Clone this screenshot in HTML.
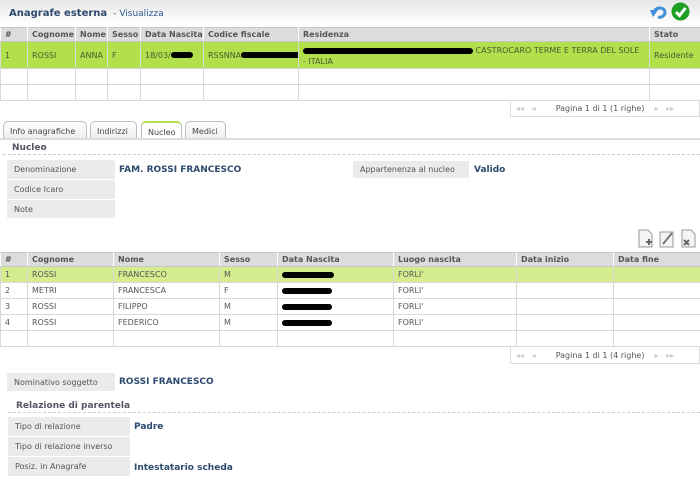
<!DOCTYPE html><html><head><meta charset="utf-8"><style>
*{margin:0;padding:0;box-sizing:border-box}
body{width:700px;height:483px;background:#fff;position:relative;overflow:hidden;font-family:"DejaVu Sans","Liberation Sans",sans-serif;font-size:8px;color:#555}
.a{position:absolute}
table{border-collapse:collapse;position:absolute;table-layout:fixed}
td,th{border:1px solid #d8d8d8;padding:0 4px;text-align:left;white-space:nowrap;overflow:hidden}
th{background:#dcdcdc;color:#555;font-weight:bold;border-color:#c8c8c8 #fff}
.lbl{position:absolute;background:#ebebeb;color:#555;padding-left:7px;display:flex;align-items:center;border-bottom:1px solid #fff}
.val{position:absolute;color:#2d4a6e;font-weight:bold;font-size:9px}
.pager{position:absolute;border:1px solid #ddd;color:#555;font-size:8px;display:flex;align-items:center}
.blk{display:inline-block;background:#000;border-radius:4px;height:6px;vertical-align:middle}
.tab{position:absolute;top:121px;height:18px;border:1px solid #bbb;border-bottom:none;border-radius:5px 5px 0 0;background:linear-gradient(#fff,#eee);padding:5px 0 0 6px;color:#444}
.dash{position:absolute;border-top:1px dashed #ccc;height:0}
</style></head><body>
<div class="a" style="left:0;top:0;width:700px;height:25px;background:linear-gradient(#e6e6e6,#fff)"></div>
<div class="a" style="left:9px;top:8px;font-size:10px;color:#2d4a6e"><b>Anagrafe esterna</b> <span style="font-size:9px;color:#2d5a8e">&nbsp;- Visualizza</span></div>
<svg class="a" style="left:650px;top:4px" width="18" height="16" viewBox="0 0 18 16"><path d="M4 9 C4 3 14 2 15 8 C15 12 11 14 8 13" fill="none" stroke="#3d8fd8" stroke-width="3"/><path d="M0 6 L8 6 L3 13 Z" fill="#3d8fd8"/></svg>
<svg class="a" style="left:671px;top:2px" width="19" height="19"><circle cx="9.5" cy="9.5" r="9" fill="#1e9e22"/><path d="M5 10 L8.5 13.5 L14.5 6" stroke="#fff" stroke-width="3" fill="none"/></svg>

<table style="left:0;top:27px;width:700px">
<colgroup><col style="width:27px"><col style="width:48px"><col style="width:32px"><col style="width:33px"><col style="width:63px"><col style="width:95px"><col style="width:351px"><col style="width:51px"></colgroup>
<tr style="height:14px"><th>#</th><th>Cognome</th><th>Nome</th><th>Sesso</th><th>Data Nascita</th><th>Codice fiscale</th><th>Residenza</th><th>Stato</th></tr>
<tr style="height:27px;background:#b2df4c;color:#4a5a30"><td>1</td><td>ROSSI</td><td>ANNA</td><td>F</td><td>18/03/<span class="blk" style="width:22px"></span></td><td>RSSNNA<span class="blk" style="width:60px"></span></td><td style="vertical-align:top;padding-top:3px;line-height:11px"><span class="blk" style="width:170px"></span> CASTROCARO TERME E TERRA DEL SOLE<br>- ITALIA</td><td>Residente</td></tr>
<tr style="height:16px"><td></td><td></td><td></td><td></td><td></td><td></td><td></td><td></td></tr>
<tr style="height:16px"><td></td><td></td><td></td><td></td><td></td><td></td><td></td><td></td></tr>
</table>
<div class="pager" style="left:510px;top:100px;width:190px;height:17px"><span style="color:#ccc;margin-left:5px">◂◂ &nbsp; ◂</span><span style="margin-left:20px">Pagina 1 di 1 (1 righe)</span><span style="color:#ccc;margin-left:10px">▸ &nbsp; ▸▸</span></div>

<div class="tab" style="left:3px;width:84px">Info anagrafiche</div>
<div class="tab" style="left:90px;width:47px">Indirizzi</div>
<div class="tab" style="left:141px;width:41px;border-top:2px solid #b2df4c;background:#fff">Nucleo</div>
<div class="tab" style="left:185px;width:41px">Medici</div>
<div class="a" style="left:0;top:138px;width:700px;border-top:2px solid #ddd"></div>
<div class="a" style="left:12px;top:143px;font-weight:bold;color:#556;font-size:9px">Nucleo</div>
<div class="dash" style="left:3px;top:154px;width:697px"></div>
<div class="lbl" style="left:7px;top:160px;width:108px;height:20px">Denominazione</div>
<div class="lbl" style="left:7px;top:180px;width:108px;height:20px">Codice Icaro</div>
<div class="lbl" style="left:7px;top:200px;width:108px;height:19px">Note</div>
<div class="val" style="left:119px;top:165px">FAM. ROSSI FRANCESCO</div>
<div class="lbl" style="left:353px;top:161px;width:116px;height:18px">Appartenenza al nucleo</div>
<div class="val" style="left:474px;top:165px">Valido</div>

<svg class="a" style="left:638px;top:229px" width="60" height="19"><g fill="#f4f4f4" stroke="#999"><path d="M1 1h9l4 4v13h-13z"/><path d="M22 3h13v15h-13z"/><path d="M44 1h9l4 4v13h-13z"/></g><path d="M8 13h6M11 10v6" stroke="#666" stroke-width="2"/><path d="M25 15l9-11" stroke="#777" stroke-width="2"/><path d="M46 11l5 5M51 11l-5 5" stroke="#666" stroke-width="2"/></svg>

<table style="left:0;top:252px;width:700px">
<colgroup><col style="width:27px"><col style="width:86px"><col style="width:106px"><col style="width:58px"><col style="width:116px"><col style="width:123px"><col style="width:97px"><col style="width:87px"></colgroup>
<tr style="height:14px"><th>#</th><th>Cognome</th><th>Nome</th><th>Sesso</th><th>Data Nascita</th><th>Luogo nascita</th><th>Data inizio</th><th>Data fine</th></tr>
<tr style="height:16px;background:#d4eb8e"><td>1</td><td>ROSSI</td><td>FRANCESCO</td><td>M</td><td><span class="blk" style="width:52px"></span></td><td>FORLI'</td><td></td><td></td></tr>
<tr style="height:16px"><td>2</td><td>METRI</td><td>FRANCESCA</td><td>F</td><td><span class="blk" style="width:50px"></span></td><td>FORLI'</td><td></td><td></td></tr>
<tr style="height:16px"><td>3</td><td>ROSSI</td><td>FILIPPO</td><td>M</td><td><span class="blk" style="width:50px"></span></td><td>FORLI'</td><td></td><td></td></tr>
<tr style="height:16px"><td>4</td><td>ROSSI</td><td>FEDERICO</td><td>M</td><td><span class="blk" style="width:50px"></span></td><td>FORLI'</td><td></td><td></td></tr>
<tr style="height:16px"><td></td><td></td><td></td><td></td><td></td><td></td><td></td><td></td></tr>
</table>
<div class="pager" style="left:510px;top:346px;width:190px;height:18px"><span style="color:#ccc;margin-left:5px">◂◂ &nbsp; ◂</span><span style="margin-left:20px">Pagina 1 di 1 (4 righe)</span><span style="color:#ccc;margin-left:10px">▸ &nbsp; ▸▸</span></div>

<div class="lbl" style="left:7px;top:373px;width:108px;height:19px">Nominativo soggetto</div>
<div class="val" style="left:119px;top:377px">ROSSI FRANCESCO</div>
<div class="a" style="left:16px;top:401px;font-weight:bold;color:#556;font-size:9px">Relazione di parentela</div>
<div class="dash" style="left:8px;top:412px;width:692px"></div>
<div class="lbl" style="left:8px;top:417px;width:122px;height:20px">Tipo di relazione</div>
<div class="lbl" style="left:8px;top:437px;width:122px;height:20px">Tipo di relazione inverso</div>
<div class="lbl" style="left:8px;top:457px;width:122px;height:20px">Posiz. in Anagrafe</div>
<div class="val" style="left:134px;top:422px">Padre</div>
<div class="val" style="left:134px;top:463px">Intestatario scheda</div>
</body></html>
